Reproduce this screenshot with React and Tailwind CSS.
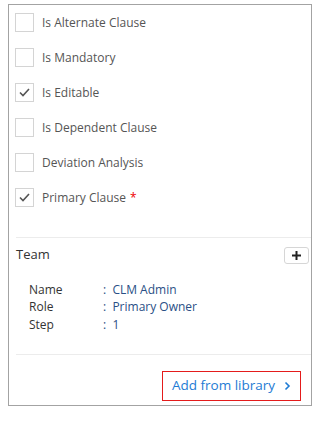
import React from 'react';

const options = [
    { label: 'Is Alternate Clause', checked: false },
    { label: 'Is Mandatory', checked: false },
    { label: 'Is Editable', checked: true },
    { label: 'Is Dependent Clause', checked: false },
    { label: 'Deviation Analysis', checked: false },
    { label: 'Primary Clause', checked: true, required: true },
];

const team = [
    { key: 'Name', value: 'CLM Admin' },
    { key: 'Role', value: 'Primary Owner' },
    { key: 'Step', value: '1' },
];

function Checkbox({ checked }) {
    return (
        <span className="w-[19px] h-[19px] border border-[#d4d4d4] bg-white flex items-center justify-center shrink-0">
            {checked && (
                <svg width="13" height="13" viewBox="0 0 13 13" fill="none">
                    <polyline points="2,6.5 5,9.5 11,3" stroke="#555" strokeWidth="1.6" />
                </svg>
            )}
        </span>
    );
}

function App() {
    return (
        <div className="bg-white w-[323px] h-[423px] pt-[4px] pl-[8px] text-[12px]" style={{ fontFamily: '"Open Sans", "Noto Sans", sans-serif' }}>
            <div className="w-[304px] h-[402px] border border-[#a3a3a3] flex flex-col">
                {/* Options */}
                <div className="pt-[8px] pl-[6px] flex flex-col gap-[16px]">
                    {options.map((o) => (
                        <label key={o.label} className="h-[19px] flex items-center gap-[8px] text-[#555]">
                            <Checkbox checked={o.checked} />
                            <span>
                                {o.label}
                                {o.required && <span className="text-[#e00] ml-[4px]">*</span>}
                            </span>
                        </label>
                    ))}
                </div>

                {/* Team */}
                <div className="ml-[7px] mt-[30px] border-t border-[#ececec] pt-[8px]">
                    <div className="flex items-center justify-between pr-[2px] h-[18px]">
                        <span className="text-[#333] text-[13px]">Team</span>
                        <button className="w-[25px] h-[17px] border border-[#d6d6d6] rounded-[3px] flex items-center justify-center">
                            <svg width="9" height="9" viewBox="0 0 9 9">
                                <path d="M4.5 0v9M0 4.5h9" stroke="#222" strokeWidth="2" />
                            </svg>
                        </button>
                    </div>
                    <div className="mt-[17px] pl-[13px] flex flex-col">
                        {team.map((t) => (
                            <div key={t.key} className="flex h-[17.5px] items-center">
                                <span className="w-[74px] text-[#333]">{t.key}</span>
                                <span className="text-[#2a4f86]">: &nbsp;{t.value}</span>
                            </div>
                        ))}
                    </div>
                </div>

                {/* Footer */}
                <div className="ml-[7px] mt-[20px] border-t border-[#ececec] pt-[16px] flex justify-end pr-[10px]">
                    <button className="h-[30px] w-[139px] border-[1.5px] border-[#e41b1b] text-[#1e7bd4] text-[13.5px] flex items-center justify-center gap-[9px]">
                        Add from library
                        <svg width="7" height="10" viewBox="0 0 7 10" fill="none">
                            <polyline points="1.5,1.5 5,5 1.5,8.5" stroke="#1e7bd4" strokeWidth="1.6" />
                        </svg>
                    </button>
                </div>
            </div>
        </div>
    );
}

export default App;
